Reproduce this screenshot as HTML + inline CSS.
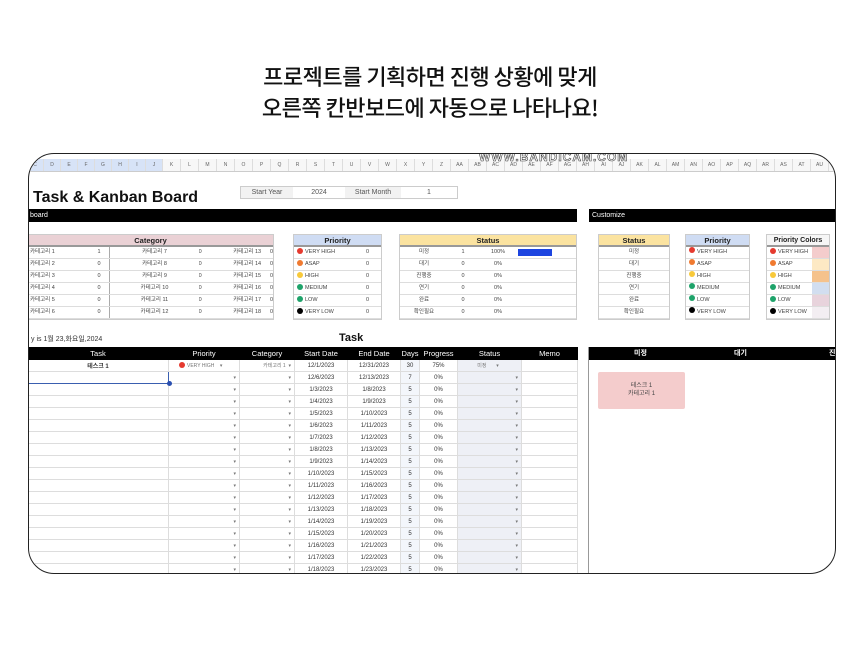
<!DOCTYPE html>
<html><head><meta charset="utf-8"><style>
*{margin:0;padding:0;box-sizing:border-box}
body{width:860px;height:652px;background:#fff;position:relative;overflow:hidden;font-family:"Liberation Sans","Noto Sans CJK KR",sans-serif;color:#222}
.h1{position:absolute;left:0;width:860px;text-align:center;font-size:22px;font-weight:500;color:#111;letter-spacing:-0.5px;font-family:"Noto Sans CJK KR",sans-serif}
.frame{position:absolute;left:28px;top:153px;width:808px;height:421px;border:1.5px solid #222;border-radius:26px;overflow:hidden;background:#fff}
.a{position:absolute}
.cols{position:absolute;left:0;top:5px;height:13px;width:900px;border-bottom:1px solid #ccc;background:#f7f7f7;font-size:5px;color:#666;display:flex;flex-wrap:nowrap;white-space:nowrap}
.cols span{flex:0 0 18px;width:18px;text-align:center;line-height:12px;border-right:1px solid #ddd}
.cols span.b{background:#d7e3f7;flex-basis:17px}
.bar{position:absolute;background:#000;color:#fff;font-size:7px;line-height:13px;height:13px}
.tb{position:absolute;border:1px solid #ccc;font-size:5.5px;color:#444}
.tb .hd{height:12px;line-height:12px;text-align:center;font-weight:bold;font-size:7.5px;color:#222;border-bottom:2px solid #999}
.tb .r{height:12px;line-height:11px;border-bottom:1px solid #ddd;display:flex}
.tb .r div{overflow:hidden;white-space:nowrap}
.dot{display:inline-block;width:6px;height:6px;border-radius:3px;margin:0 2px 0 3px;vertical-align:-1px}
table{border-collapse:collapse;table-layout:fixed;font-size:6px;color:#333}
td{height:12px;border:1px solid #ddd;text-align:center;white-space:nowrap;overflow:hidden;padding:0}
td.dd{text-align:right;padding-right:3px;font-size:5px;color:#777}
td.g{background:#eef0f6}
td.bl{background:#f3f6fb}
</style></head><body>
<div class="h1" style="top:60px">프로젝트를 기획하면 진행 상황에 맞게</div>
<div class="h1" style="top:91px">오른쪽 칸반보드에 자동으로 나타나요!</div>

<div class="frame">
<div class="cols" style="left:-2px"><span class="b">C</span><span class="b">D</span><span class="b">E</span><span class="b">F</span><span class="b">G</span><span class="b">H</span><span class="b">I</span><span class="b">J</span><span>K</span><span>L</span><span>M</span><span>N</span><span>O</span><span>P</span><span>Q</span><span>R</span><span>S</span><span>T</span><span>U</span><span>V</span><span>W</span><span>X</span><span>Y</span><span>Z</span><span>AA</span><span>AB</span><span>AC</span><span>AD</span><span>AE</span><span>AF</span><span>AG</span><span>AH</span><span>AI</span><span>AJ</span><span>AK</span><span>AL</span><span>AM</span><span>AN</span><span>AO</span><span>AP</span><span>AQ</span><span>AR</span><span>AS</span><span>AT</span><span>AU</span><span>AV</span></div>
<div class="a" style="left:450px;top:-4px;font-size:12px;font-weight:bold;color:#fff;-webkit-text-stroke:0.6px #444;letter-spacing:1px">WWW.BANDICAM.COM</div>

<div class="a" style="left:4px;top:35px;font-size:16px;font-weight:bold;color:#111">Task &amp; Kanban Board</div>
<div class="a" style="left:211px;top:32px;width:218px;height:13px;border:1px solid #ccc;font-size:7px;color:#555;display:flex;line-height:11px">
<div style="width:52px;background:#f2f2f2;text-align:center">Start Year</div><div style="width:52px;text-align:center">2024</div><div style="width:56px;background:#f2f2f2;text-align:center">Start Month</div><div style="flex:1;text-align:center">1</div></div>

<div class="bar" style="left:0;top:55px;width:548px;padding-left:1px">board</div>
<div class="bar" style="left:560px;top:55px;width:250px;padding-left:3px">Customize</div>

<!-- Category -->
<div class="tb" style="left:-2px;top:80px;width:247px">
<div class="hd" style="background:#ead1d5">Category</div>
<div class="r"><div style="width:70px;padding-left:2px">카테고리 1</div><div style="width:12px">1</div><div style="width:90px;text-align:center;border-left:1px solid #aaa">카테고리 7</div><div style="width:8px">0</div><div style="width:55px;text-align:right">카테고리 13</div><div style="width:12px;text-align:right">0</div></div>
<div class="r"><div style="width:70px;padding-left:2px">카테고리 2</div><div style="width:12px">0</div><div style="width:90px;text-align:center;border-left:1px solid #aaa">카테고리 8</div><div style="width:8px">0</div><div style="width:55px;text-align:right">카테고리 14</div><div style="width:12px;text-align:right">0</div></div>
<div class="r"><div style="width:70px;padding-left:2px">카테고리 3</div><div style="width:12px">0</div><div style="width:90px;text-align:center;border-left:1px solid #aaa">카테고리 9</div><div style="width:8px">0</div><div style="width:55px;text-align:right">카테고리 15</div><div style="width:12px;text-align:right">0</div></div>
<div class="r"><div style="width:70px;padding-left:2px">카테고리 4</div><div style="width:12px">0</div><div style="width:90px;text-align:center;border-left:1px solid #aaa">카테고리 10</div><div style="width:8px">0</div><div style="width:55px;text-align:right">카테고리 16</div><div style="width:12px;text-align:right">0</div></div>
<div class="r"><div style="width:70px;padding-left:2px">카테고리 5</div><div style="width:12px">0</div><div style="width:90px;text-align:center;border-left:1px solid #aaa">카테고리 11</div><div style="width:8px">0</div><div style="width:55px;text-align:right">카테고리 17</div><div style="width:12px;text-align:right">0</div></div>
<div class="r"><div style="width:70px;padding-left:2px">카테고리 6</div><div style="width:12px">0</div><div style="width:90px;text-align:center;border-left:1px solid #aaa">카테고리 12</div><div style="width:8px">0</div><div style="width:55px;text-align:right">카테고리 18</div><div style="width:12px;text-align:right">0</div></div>
</div>

<!-- Priority -->
<div class="tb" style="left:264px;top:80px;width:89px">
<div class="hd" style="background:#cfdcf3">Priority</div>
<div class="r"><div style="width:72px"><span class="dot" style="background:#e53a2f"></span>VERY HIGH</div><div>0</div></div>
<div class="r"><div style="width:72px"><span class="dot" style="background:#f07a30"></span>ASAP</div><div>0</div></div>
<div class="r"><div style="width:72px"><span class="dot" style="background:#f8c93a"></span>HIGH</div><div>0</div></div>
<div class="r"><div style="width:72px"><span class="dot" style="background:#1ea36a"></span>MEDIUM</div><div>0</div></div>
<div class="r"><div style="width:72px"><span class="dot" style="background:#1ea36a"></span>LOW</div><div>0</div></div>
<div class="r"><div style="width:72px"><span class="dot" style="background:#000"></span>VERY LOW</div><div>0</div></div>
</div>

<!-- Status -->
<div class="tb" style="left:370px;top:80px;width:178px">
<div class="hd" style="background:#fbe3a0">Status</div>
<div class="r"><div style="width:48px;text-align:center">미정</div><div style="width:30px;text-align:center">1</div><div style="width:40px;text-align:center">100%</div><div style="width:34px;background:#1d45e0;margin:2px 0;height:7px"></div></div>
<div class="r"><div style="width:48px;text-align:center">대기</div><div style="width:30px;text-align:center">0</div><div style="width:40px;text-align:center">0%</div></div>
<div class="r"><div style="width:48px;text-align:center">진행중</div><div style="width:30px;text-align:center">0</div><div style="width:40px;text-align:center">0%</div></div>
<div class="r"><div style="width:48px;text-align:center">연기</div><div style="width:30px;text-align:center">0</div><div style="width:40px;text-align:center">0%</div></div>
<div class="r"><div style="width:48px;text-align:center">완료</div><div style="width:30px;text-align:center">0</div><div style="width:40px;text-align:center">0%</div></div>
<div class="r"><div style="width:48px;text-align:center">확인필요</div><div style="width:30px;text-align:center">0</div><div style="width:40px;text-align:center">0%</div></div>
</div>

<!-- Customize -->
<div class="tb" style="left:569px;top:80px;width:72px">
<div class="hd" style="background:#fbe3a0">Status</div>
<div class="r" style="justify-content:center">미정</div><div class="r" style="justify-content:center">대기</div><div class="r" style="justify-content:center">진행중</div><div class="r" style="justify-content:center">연기</div><div class="r" style="justify-content:center">완료</div><div class="r" style="justify-content:center">확인필요</div>
</div>
<div class="tb" style="left:656px;top:80px;width:65px">
<div class="hd" style="background:#cfdcf3">Priority</div>
<div class="r"><span class="dot" style="background:#e53a2f"></span>VERY HIGH</div>
<div class="r"><span class="dot" style="background:#f07a30"></span>ASAP</div>
<div class="r"><span class="dot" style="background:#f8c93a"></span>HIGH</div>
<div class="r"><span class="dot" style="background:#1ea36a"></span>MEDIUM</div>
<div class="r"><span class="dot" style="background:#1ea36a"></span>LOW</div>
<div class="r"><span class="dot" style="background:#000"></span>VERY LOW</div>
</div>
<div class="tb" style="left:737px;top:80px;width:64px">
<div class="hd" style="background:#f6f6f6;font-size:7px">Priority Colors</div>
<div class="r"><div style="width:45px"><span class="dot" style="background:#e53a2f"></span>VERY HIGH</div><div style="flex:1;background:#f4cccc"></div></div>
<div class="r"><div style="width:45px"><span class="dot" style="background:#f07a30"></span>ASAP</div><div style="flex:1;background:#fde9c4"></div></div>
<div class="r"><div style="width:45px"><span class="dot" style="background:#f8c93a"></span>HIGH</div><div style="flex:1;background:#f5c28c"></div></div>
<div class="r"><div style="width:45px"><span class="dot" style="background:#1ea36a"></span>MEDIUM</div><div style="flex:1;background:#d2def0"></div></div>
<div class="r"><div style="width:45px"><span class="dot" style="background:#1ea36a"></span>LOW</div><div style="flex:1;background:#e8d3dc"></div></div>
<div class="r"><div style="width:45px"><span class="dot" style="background:#000"></span>VERY LOW</div><div style="flex:1;background:#f3eef2"></div></div>
</div>

<div class="a" style="left:2px;top:180px;font-size:7px;color:#333">y is 1월 23,화요일,2024</div>
<div class="a" style="left:310px;top:178px;font-size:11px;font-weight:bold;color:#111">Task</div>

<!-- task table -->
<div class="a" style="left:-2px;top:193px">
<table style="width:550px">
<colgroup><col style="width:141px"><col style="width:71px"><col style="width:55px"><col style="width:53px"><col style="width:53px"><col style="width:19px"><col style="width:38px"><col style="width:64px"><col style="width:56px"></colgroup>
<tr style="background:#000;color:#fff;font-size:7.5px"><td style="border-color:#000">Task</td><td style="border-color:#000">Priority</td><td style="border-color:#000">Category</td><td style="border-color:#000">Start Date</td><td style="border-color:#000">End Date</td><td style="border-color:#000">Days</td><td style="border-color:#000">Progress</td><td style="border-color:#000">Status</td><td style="border-color:#000">Memo</td></tr>
<tr><td style="font-weight:bold">테스크 1</td><td class="dd" style="text-align:left;padding-left:10px"><span class="dot" style="background:#e53a2f;margin-left:0"></span>VERY HIGH &nbsp; &nbsp;▾</td><td class="dd">카테고리 1 &nbsp;▾</td><td>12/1/2023</td><td>12/31/2023</td><td class="bl">30</td><td>75%</td><td class="g dd" style="text-align:center">미정 &nbsp; &nbsp; &nbsp; ▾</td><td></td></tr>
<tr><td style="border:1.5px solid #3a5fb0"></td><td class="dd">▾</td><td class="dd">▾</td><td>12/6/2023</td><td>12/13/2023</td><td class="bl">7</td><td>0%</td><td class="g dd">▾</td><td></td></tr>
<tr><td></td><td class="dd">▾</td><td class="dd">▾</td><td>1/3/2023</td><td>1/8/2023</td><td class="bl">5</td><td>0%</td><td class="g dd">▾</td><td></td></tr>
<tr><td></td><td class="dd">▾</td><td class="dd">▾</td><td>1/4/2023</td><td>1/9/2023</td><td class="bl">5</td><td>0%</td><td class="g dd">▾</td><td></td></tr>
<tr><td></td><td class="dd">▾</td><td class="dd">▾</td><td>1/5/2023</td><td>1/10/2023</td><td class="bl">5</td><td>0%</td><td class="g dd">▾</td><td></td></tr>
<tr><td></td><td class="dd">▾</td><td class="dd">▾</td><td>1/6/2023</td><td>1/11/2023</td><td class="bl">5</td><td>0%</td><td class="g dd">▾</td><td></td></tr>
<tr><td></td><td class="dd">▾</td><td class="dd">▾</td><td>1/7/2023</td><td>1/12/2023</td><td class="bl">5</td><td>0%</td><td class="g dd">▾</td><td></td></tr>
<tr><td></td><td class="dd">▾</td><td class="dd">▾</td><td>1/8/2023</td><td>1/13/2023</td><td class="bl">5</td><td>0%</td><td class="g dd">▾</td><td></td></tr>
<tr><td></td><td class="dd">▾</td><td class="dd">▾</td><td>1/9/2023</td><td>1/14/2023</td><td class="bl">5</td><td>0%</td><td class="g dd">▾</td><td></td></tr>
<tr><td></td><td class="dd">▾</td><td class="dd">▾</td><td>1/10/2023</td><td>1/15/2023</td><td class="bl">5</td><td>0%</td><td class="g dd">▾</td><td></td></tr>
<tr><td></td><td class="dd">▾</td><td class="dd">▾</td><td>1/11/2023</td><td>1/16/2023</td><td class="bl">5</td><td>0%</td><td class="g dd">▾</td><td></td></tr>
<tr><td></td><td class="dd">▾</td><td class="dd">▾</td><td>1/12/2023</td><td>1/17/2023</td><td class="bl">5</td><td>0%</td><td class="g dd">▾</td><td></td></tr>
<tr><td></td><td class="dd">▾</td><td class="dd">▾</td><td>1/13/2023</td><td>1/18/2023</td><td class="bl">5</td><td>0%</td><td class="g dd">▾</td><td></td></tr>
<tr><td></td><td class="dd">▾</td><td class="dd">▾</td><td>1/14/2023</td><td>1/19/2023</td><td class="bl">5</td><td>0%</td><td class="g dd">▾</td><td></td></tr>
<tr><td></td><td class="dd">▾</td><td class="dd">▾</td><td>1/15/2023</td><td>1/20/2023</td><td class="bl">5</td><td>0%</td><td class="g dd">▾</td><td></td></tr>
<tr><td></td><td class="dd">▾</td><td class="dd">▾</td><td>1/16/2023</td><td>1/21/2023</td><td class="bl">5</td><td>0%</td><td class="g dd">▾</td><td></td></tr>
<tr><td></td><td class="dd">▾</td><td class="dd">▾</td><td>1/17/2023</td><td>1/22/2023</td><td class="bl">5</td><td>0%</td><td class="g dd">▾</td><td></td></tr>
<tr><td></td><td class="dd">▾</td><td class="dd">▾</td><td>1/18/2023</td><td>1/23/2023</td><td class="bl">5</td><td>0%</td><td class="g dd">▾</td><td></td></tr>
</table></div>
<div class="a" style="left:138px;top:227px;width:5px;height:5px;border-radius:3px;background:#2a4fb0"></div>

<!-- kanban -->
<div class="a" style="left:559px;top:193px;width:1px;height:230px;background:#999"></div>
<div class="bar" style="left:560px;top:193px;width:250px;font-weight:bold;font-size:7px"><span class="a" style="left:45px">미정</span><span class="a" style="left:145px">대기</span><span class="a" style="left:240px">진</span></div>
<div class="a" style="left:569px;top:218px;width:87px;height:37px;background:#f4cccc;border-radius:2px;font-size:6px;text-align:center;line-height:8px;padding-top:10px;color:#444">테스크 1<br>카테고리 1</div>
</div>
</body></html>
